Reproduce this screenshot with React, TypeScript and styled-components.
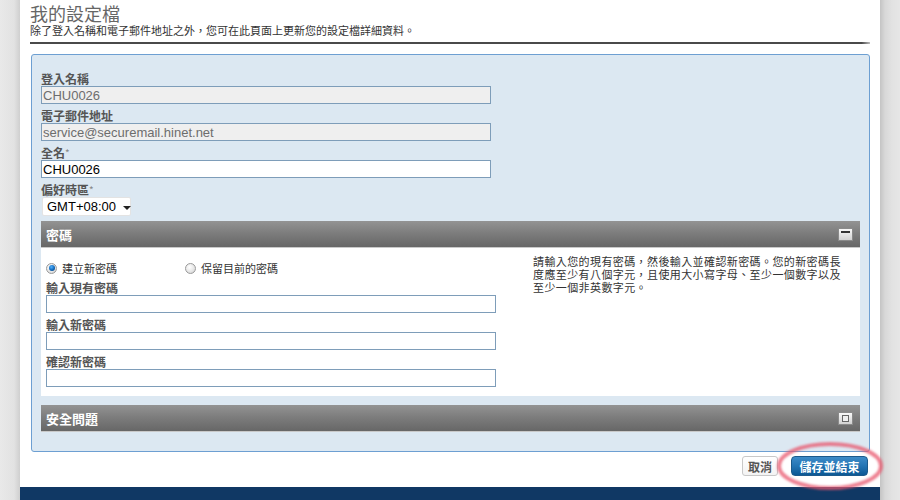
import React from 'react'
import styled, { createGlobalStyle } from 'styled-components'

const GlobalStyle = createGlobalStyle`
  html, body {
    margin: 0;
    padding: 0;
    background: #fff;
  }
  body {
    font-family: "Liberation Sans", "Noto Sans CJK TC", Arial, sans-serif;
    font-size: 12px;
    color: #333;
  }
`

const Page = styled.div`
  display: flex;
  width: 900px;
  height: 500px;
  overflow: hidden;
`

type GutterProps = {
  $side: 'left' | 'right';
}
const Gutter = styled.div<GutterProps>`
  width: 20px;
  flex-shrink: 0;
  background: ${({ $side }) => $side === 'left'
    ? 'linear-gradient(to right, #e9e9e9 0%, #e2e2e2 70%, #cfcfcf 100%)'
    : 'linear-gradient(to right, #c4c4c4 0%, #d8d8d8 25%, #e2e2e2 60%, #e6e6e6 100%)'};
`

const Main = styled.div`
  width: 860px;
  display: flex;
  flex-direction: column;
  background: #fff;
`

const Content = styled.div`
  padding: 0 10px;
`

const Title = styled.h1`
  margin: 0;
  padding-top: 3px;
  height: 20px;
  font-family: "Noto Sans CJK TC", sans-serif;
  font-weight: 400;
  font-size: 18px;
  line-height: 20px;
  color: #666;
`

const Subtitle = styled.p`
  margin: 0;
  font-family: "Noto Sans CJK TC", sans-serif;
  font-size: 11px;
  line-height: 14px;
  color: #333;
`

const Rule = styled.div`
  margin-top: 5px;
  height: 2px;
  background: linear-gradient(to right, #4a4a4a 0%, #4a4a4a 99%, #bbb 100%);
`

const Panel = styled.div`
  margin: 10px 0 0 1px;
  padding: 16px 9px 19px 9px;
  background: #dce8f2;
  border: 1px solid #6d9fd2;
  border-radius: 3px;
`

const Field = styled.div`
  margin-bottom: 4px;
`

const Label = styled.label`
  display: block;
  font-family: "Noto Sans CJK TC", sans-serif;
  font-weight: 700;
  font-size: 12px;
  line-height: 15px;
  color: #555;
`

const Required = styled.span`
  color: #888;
  font-weight: 400;
  font-size: 10px;
  vertical-align: top;
`

type InputProps = {
  $readonly?: boolean;
}
const TextInput = styled.input<InputProps>`
  display: block;
  box-sizing: border-box;
  width: 450px;
  height: 18px;
  margin: 0;
  padding: 0 1px;
  border: 1px solid #7e9db9;
  background: ${({ $readonly }) => $readonly ? '#efefef' : '#fff'};
  color: ${({ $readonly }) => $readonly ? '#6d6d6d' : '#000'};
  font-family: "Liberation Sans", Arial, sans-serif;
  font-size: 13px;
  outline: none;
`

const Select = styled.div`
  display: flex;
  align-items: center;
  gap: 7px;
  box-sizing: border-box;
  width: 89px;
  height: 19px;
  margin-left: 1px;
  padding: 0 4px 0 4px;
  background: #fff;
  border: 1px solid #e3e3e3;
  border-radius: 2px;
  font-family: "Liberation Sans", Arial, sans-serif;
  font-size: 13px;
  color: #000;
`

const Caret = styled.span`
  width: 0;
  height: 0;
  border-left: 4px solid transparent;
  border-right: 4px solid transparent;
  border-top: 4px solid #222;
  margin-top: 2px;
`

const Section = styled.div`
  margin-top: 5px;

  & + & {
    margin-top: 9px;
  }
`

const SectionHeader = styled.div`
  display: flex;
  align-items: center;
  justify-content: space-between;
  height: 26px;
  padding: 0 7px 0 5px;
  background: linear-gradient(to bottom, #939393 0%, #7b7b7b 50%, #676767 100%);
  border-bottom: 1px solid #c9c9c9;
  color: #fff;
  font-family: "Noto Sans CJK TC", sans-serif;
  font-weight: 700;
  font-size: 13px;
`

const SectionBody = styled.div`
  display: grid;
  grid-template-columns: 450px 1fr;
  column-gap: 37px;
  padding: 7px 0 9px 5px;
  background: #fff;
`

const LeftCol = styled.div`
  padding-top: 6px;

  & > ${Field}:last-child {
    margin-bottom: 0;
  }
`

const RadioRow = styled.div`
  display: flex;
  height: 14px;
  margin-bottom: 5px;
`

const RadioOption = styled.label`
  display: flex;
  align-items: center;
  gap: 5px;
  width: 139px;
  font-family: "Noto Sans CJK TC", sans-serif;
  font-size: 11px;
  color: #333;
`

type RadioDotProps = {
  $checked?: boolean;
}
const RadioDot = styled.span<RadioDotProps>`
  position: relative;
  box-sizing: border-box;
  width: 11px;
  height: 11px;
  border-radius: 50%;
  border: 1px solid #9a9a9a;
  background: radial-gradient(circle at 40% 35%, #ffffff 0%, #e4e4e4 60%, #c9c9c9 100%);

  &::after {
    content: '';
    display: ${({ $checked }) => $checked ? 'block' : 'none'};
    position: absolute;
    left: 1.5px;
    top: 1.5px;
    width: 6px;
    height: 6px;
    border-radius: 50%;
    background: radial-gradient(circle at 40% 35%, #4fb0ff 0%, #0b62b3 60%, #062f5a 100%);
  }
`

const HelpText = styled.div`
  display: flex;
  flex-direction: column;
  font-family: "Noto Sans CJK TC", sans-serif;
  font-size: 11px;
  letter-spacing: 0.4px;
  color: #333;
`

const HelpLine = styled.span`
  display: block;
  height: 13px;
  line-height: 13px;
`

const Footer = styled.div`
  display: flex;
  justify-content: flex-end;
  gap: 13px;
  height: 35px;
  box-sizing: border-box;
  padding: 4px 2px 0 0;
`

const CancelButton = styled.button`
  box-sizing: border-box;
  height: 20px;
  padding: 0 5px;
  background: linear-gradient(to bottom, #ffffff 0%, #f3f3f3 100%);
  border: 1px solid #c8c8c8;
  border-radius: 3px;
  color: #555;
  font-family: "Noto Sans CJK TC", sans-serif;
  font-weight: 700;
  font-size: 12px;
  cursor: pointer;
`

const SaveWrap = styled.div`
  position: relative;
`

const SaveButton = styled.button`
  box-sizing: border-box;
  width: 77px;
  height: 20px;
  padding: 0;
  background: linear-gradient(to bottom, #3d8bc8 0%, #2475b4 50%, #0c5894 100%);
  border: 1px solid #1c5a8c;
  border-radius: 4px;
  color: #fff;
  font-family: "Noto Sans CJK TC", sans-serif;
  font-weight: 700;
  font-size: 12px;
  cursor: pointer;
`

const Highlight = styled.svg`
  position: absolute;
  left: -14px;
  top: -13px;
  width: 110px;
  height: 50px;
  pointer-events: none;
  overflow: visible;
`

const NavBar = styled.div`
  flex: 1;
  background: #103864;
`

function CollapseIcon ({ open }: { open: boolean }) {
  const id = open ? 'ciOpen' : 'ciClosed'
  return (
    <svg width="15" height="13" viewBox="0 0 15 13">
      <defs>
        <linearGradient id={id} x1="0" y1="0" x2="0" y2="1">
          <stop offset="0" stopColor="#fafafa" />
          <stop offset="1" stopColor="#cfcfcf" />
        </linearGradient>
      </defs>
      <rect x="0.5" y="0.5" width="14" height="12" fill={`url(#${id})`} stroke="#8a8a8a" />
      {open
        ? <rect x="3" y="3" width="9" height="2" fill="#333" />
        : <rect x="4.5" y="3.5" width="6" height="6" fill="#eee" stroke="#666" />}
    </svg>
  )
}

function App () {
  return (
    <Page>
      <GlobalStyle />
      <Gutter $side="left" />
      <Main>
        <Content>
          <Title>我的設定檔</Title>
          <Subtitle>除了登入名稱和電子郵件地址之外，您可在此頁面上更新您的設定檔詳細資料。</Subtitle>
          <Rule />

          <Panel>
            <Field>
              <Label>登入名稱</Label>
              <TextInput $readonly readOnly value="CHU0026" />
            </Field>
            <Field>
              <Label>電子郵件地址</Label>
              <TextInput $readonly readOnly value="service@securemail.hinet.net" />
            </Field>
            <Field>
              <Label>全名<Required>*</Required></Label>
              <TextInput defaultValue="CHU0026" />
            </Field>
            <Field>
              <Label>偏好時區<Required>*</Required></Label>
              <Select>GMT+08:00 <Caret /></Select>
            </Field>

            <Section>
              <SectionHeader>
                密碼
                <CollapseIcon open={true} />
              </SectionHeader>
              <SectionBody>
                <LeftCol>
                  <RadioRow>
                    <RadioOption><RadioDot $checked />建立新密碼</RadioOption>
                    <RadioOption><RadioDot />保留目前的密碼</RadioOption>
                  </RadioRow>
                  <Field>
                    <Label>輸入現有密碼</Label>
                    <TextInput type="password" />
                  </Field>
                  <Field>
                    <Label>輸入新密碼</Label>
                    <TextInput type="password" />
                  </Field>
                  <Field>
                    <Label>確認新密碼</Label>
                    <TextInput type="password" />
                  </Field>
                </LeftCol>
                <HelpText>
                  <HelpLine>請輸入您的現有密碼，然後輸入並確認新密碼。您的新密碼長</HelpLine>
                  <HelpLine>度應至少有八個字元，且使用大小寫字母、至少一個數字以及</HelpLine>
                  <HelpLine>至少一個非英數字元。</HelpLine>
                </HelpText>
              </SectionBody>
            </Section>

            <Section>
              <SectionHeader>
                安全問題
                <CollapseIcon open={false} />
              </SectionHeader>
            </Section>
          </Panel>

          <Footer>
            <CancelButton>取消</CancelButton>
            <SaveWrap>
              <SaveButton>儲存並結束</SaveButton>
              <Highlight viewBox="0 0 110 50">
                <defs>
                  <filter id="soft">
                    <feGaussianBlur stdDeviation="0.8" />
                  </filter>
                </defs>
                <ellipse cx="53" cy="23" rx="51" ry="22" fill="none" stroke="#e8576d" strokeOpacity="0.75" strokeWidth="4" filter="url(#soft)" />
              </Highlight>
            </SaveWrap>
          </Footer>
        </Content>
        <NavBar />
      </Main>
      <Gutter $side="right" />
    </Page>
  )
}

export default App
